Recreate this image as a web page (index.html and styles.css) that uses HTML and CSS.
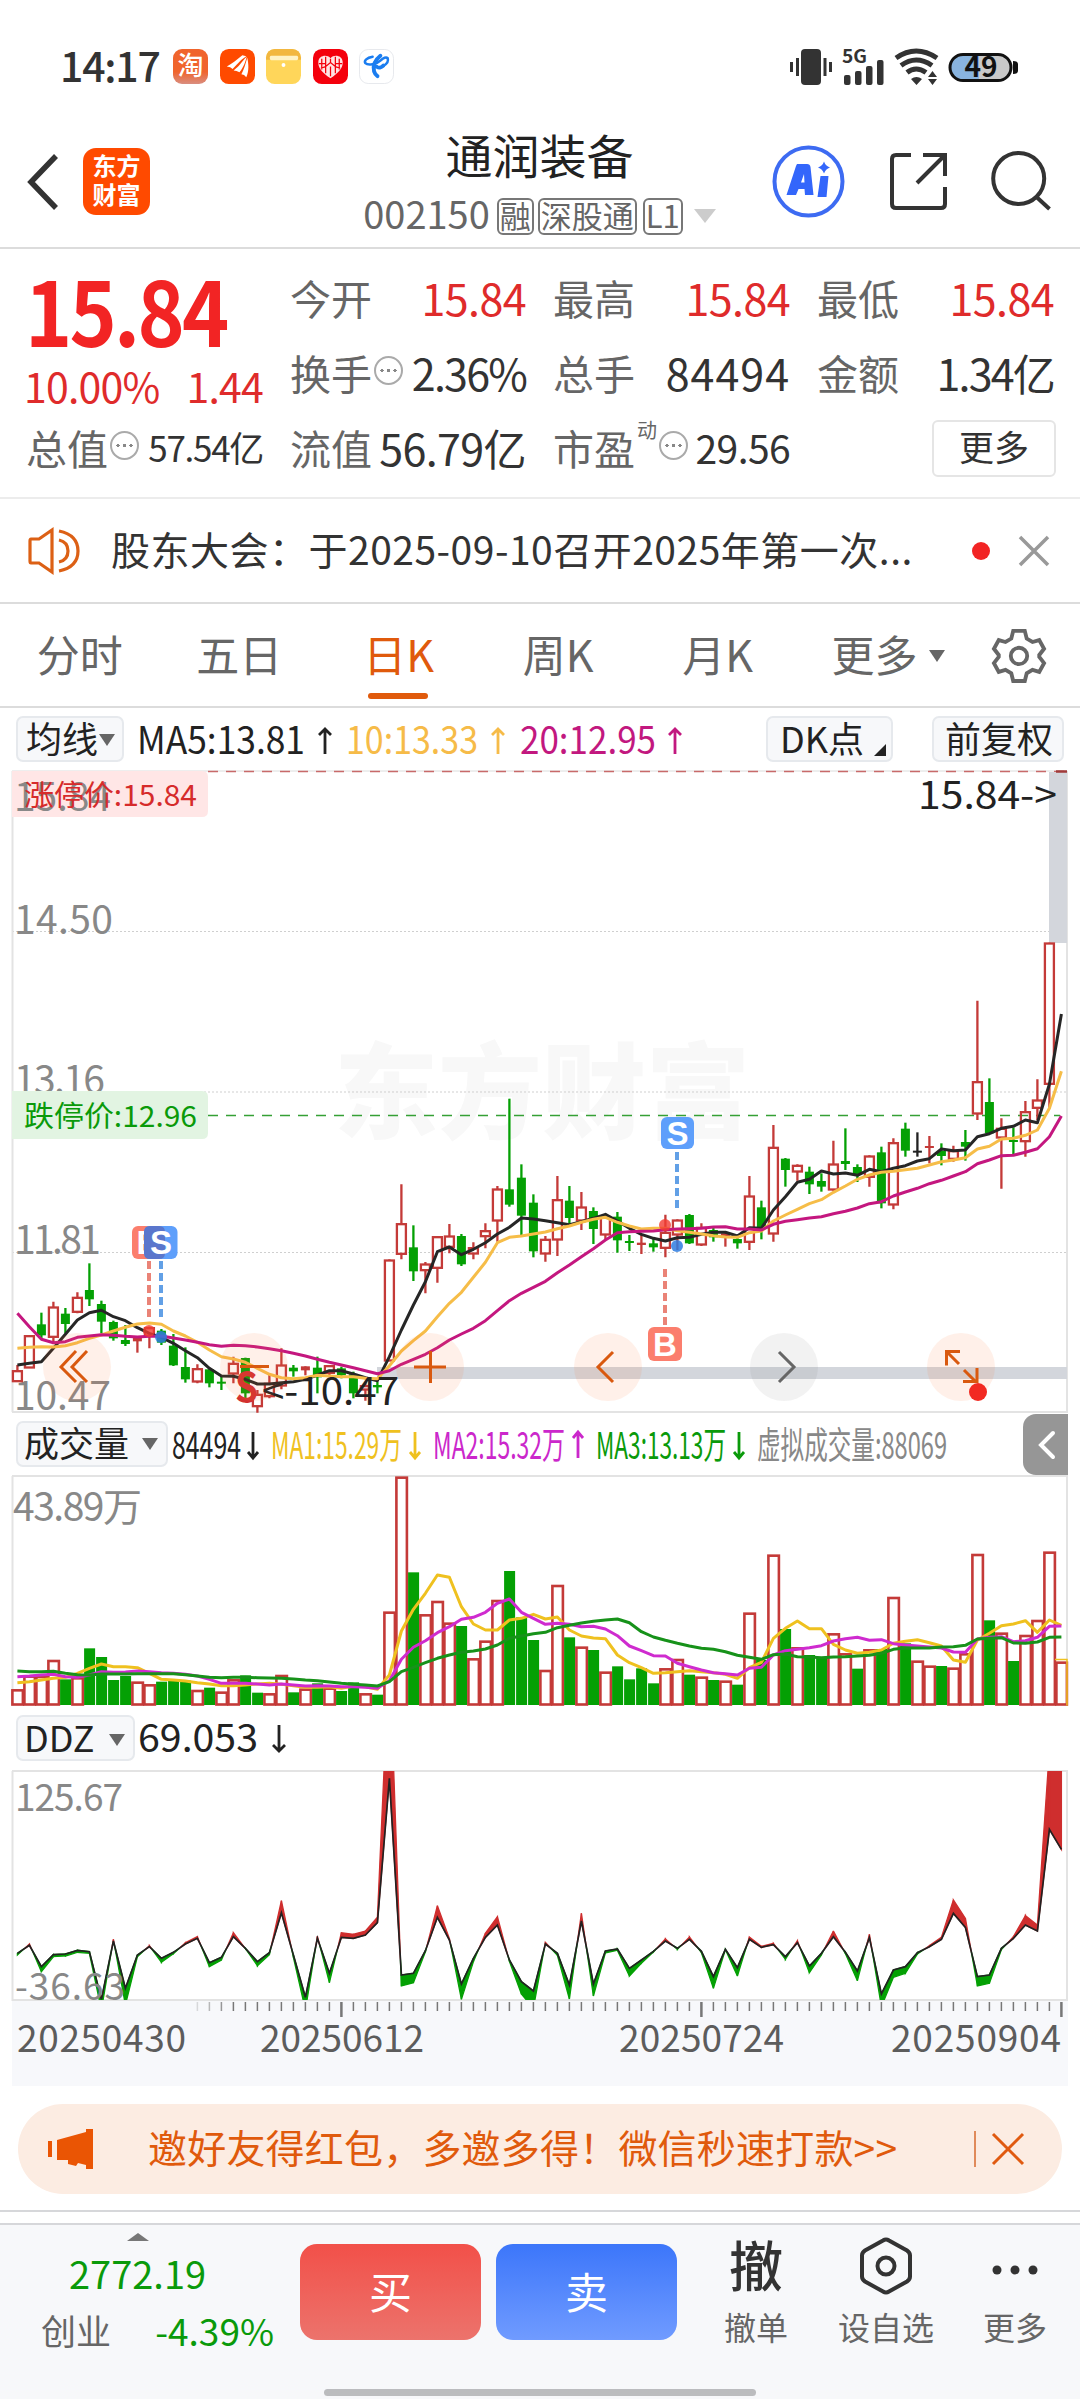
FILE: index.html
```html
<!DOCTYPE html>
<html lang="zh-CN">
<head>
<meta charset="utf-8">
<title>通润装备 002150</title>
<link rel="stylesheet" href="styles.css">
</head>
<body>
<div class="status">
  <span class="time">14:17</span>
  <span class="app tao">淘</span>
  <svg class="app" viewBox="0 0 36 36"><rect width="36" height="36" rx="9" fill="#ff4a00"/><path d="M7 18C13 15 17 11 23 6.500l4 1C20 12 17 17 13 20.500q-2-2-6-2.500zM14 22c6-4 8-9 13.500-14C26 13 25 18 20 24q-3-2-6-2zM22 26c3-6 4-10 6-17 1.500 6 2 14-1 20q-2-3-5-3z" fill="#fff"/></svg>
  <svg class="app" viewBox="0 0 36 36"><rect width="36" height="36" rx="9" fill="#ffd65a"/><path d="M0 11V9a9 9 0 0 1 9-9h18a9 9 0 0 1 9 9v2z" fill="#f2b740"/><rect x="4" y="7" width="29" height="4.500" rx="1.500" fill="#fff2c4"/><circle cx="18" cy="16.500" r="2" fill="#fff"/></svg>
  <svg class="app" viewBox="0 0 36 36"><rect width="36" height="36" rx="9" fill="#f4000c"/><path d="M18 30C9 24 5 19 5.500 13 6 7 14 5 18 9.500 22 5 30 7 30.500 13 31 19 27 24 18 30z" fill="#ffe3e3"/><path d="M9 10v11M13 8v17M18 10v4M18 18v10M23 8v17M27 10v11M6 15h7M23 15h7M13 18l5-4 5 4M8 20l5-2M28 20l-5-2" stroke="#f4000c" stroke-width="1.300" fill="none"/></svg>
  <svg class="app" viewBox="0 0 36 36"><rect x=".5" y=".5" width="35" height="35" rx="9" fill="#fff" stroke="#e6e8ec"/><path d="M14 8C8 9 5 12 6.500 14.500 9 17 18 16 22 12c3-3 6-4 7.500-2.500 1 3-1 6-4.500 8" stroke="#1b7df0" stroke-width="2.600" fill="none" stroke-linecap="round"/><path d="M22 7c-5 4-8 10-6.500 16 1 3 2 4 3.500 5M18 18c2 2 5 1 7-1" stroke="#1b7df0" stroke-width="4" fill="none" stroke-linecap="round"/></svg>
  <svg class="sys" viewBox="0 0 228 40">
    <g fill="#333"><rect x="10" y="2" width="20" height="36" rx="4"/><rect x="5" y="11" width="3" height="18"/><rect x="-1" y="15" width="3" height="10"/><rect x="32.500" y="11" width="3" height="18"/><rect x="38" y="15" width="3" height="10"/>
    <rect x="53" y="28" width="6.500" height="10" rx="2"/><rect x="64" y="24" width="6.500" height="14" rx="2"/><rect x="75" y="19" width="6.500" height="19" rx="2"/><rect x="86" y="13" width="6.500" height="25" rx="2"/>
    <path d="M120 32q5.500-4 11 0l-5.500 6zM137 30l4.500-6 4.500 6zM137 32l4.500 6 4.500-6z"/></g>
    <text x="51" y="15.500" font-size="18" font-weight="700" textLength="25" lengthAdjust="spacingAndGlyphs" fill="#333">5G</text>
    <g fill="none" stroke="#333" stroke-width="5"><path d="M105 11q20-14 41 0M110 18.500q15-11 31 0M116 25.500q9-7 19 0"/></g>
    <rect x="159" y="7.500" width="61" height="26" rx="13" fill="#c9c9c9"/><path d="M188 7.500h-16a13 13 0 0 0 0 26h16z" fill="#89b4df"/><rect x="159" y="7.500" width="61" height="26" rx="13" fill="none" stroke="#111" stroke-width="3"/><path d="M222 14q5 0 5 3v7q0 3-5 3z" fill="#111"/>
    <text x="190" y="30" font-size="28" font-weight="700" text-anchor="middle" fill="#111">49</text>
  </svg>
</div>

<div class="nav">
  <svg class="back" viewBox="0 0 36 60"><path d="M32 4L7 30l25 26" fill="none" stroke="#333" stroke-width="5.500"/></svg>
  <div class="logo">东方<br>财富</div>
  <div class="title">
    <div class="name">通润装备</div>
    <div class="code"><span>002150</span><span class="tag">融</span><span class="tag">深股通</span><span class="tag">L1</span><i class="tri"></i></div>
  </div>
  <svg class="acts" viewBox="0 0 290 76">
    <circle cx="36.500" cy="37.500" r="34" fill="#fff" stroke="#3d6bf2" stroke-width="4"/>
    <path fill-rule="evenodd" d="M25 20h10q3 0 3.500 3L41.500 51h-8.500l-.5-6h-6l-2.500 6H14.500L24 22zM32 30l-3 8.500h3.500z" fill="#3366fb"/><path d="M48.500 32h8L54.500 53H45.500z" fill="#3366fb"/><path d="M52 17.500q1.500 4.500 6 6-4.500 1.500-6 6-1.500-4.500-6-6 4.500-1.500 6-6z" fill="#3366fb"/>
    <path d="M139 11h-15q-4 0-4 4v45q0 4 4 4h45q4 0 4-4V43M173 32V11h-22M172 12L145 39" fill="none" stroke="#333" stroke-width="4"/>
    <circle cx="246.700" cy="34.500" r="25.500" fill="none" stroke="#333" stroke-width="4"/><path d="M264.500 53l13 12" stroke="#333" stroke-width="4"/>
  </svg>
</div>

<div class="quote">
  <div class="last">
    <b>15.84</b>
    <div class="chg"><span>10.00%</span><span>1.44</span></div>
  </div>
  <div class="cell r1 c2"><label>今开</label><span class="red">15.84</span></div>
  <div class="cell r1 c3"><label>最高</label><span class="red">15.84</span></div>
  <div class="cell r1 c4"><label>最低</label><span class="red">15.84</span></div>
  <div class="cell r2 c2"><label>换手<i class="dots"></i></label><span class="tight">2.36%</span></div>
  <div class="cell r2 c3"><label>总手</label><span class="loose">84494</span></div>
  <div class="cell r2 c4"><label>金额</label><span class="tight">1.34亿</span></div>
  <div class="cell r3 c1"><label>总值<i class="dots"></i></label><span class="small">57.54亿</span></div>
  <div class="cell r3 c2"><label>流值</label><span>56.79亿</span></div>
  <div class="cell r3 c3"><label>市盈<sup>动</sup><i class="dots"></i></label><span class="mid">29.56</span></div>
  <div class="cell r3 c4 end"><button class="more">更多</button></div>
</div>

<div class="news">
  <svg viewBox="0 0 54 46" class="horn"><path d="M3 11h8l13-9v42L11 35H3q-1 0-1-2V13q0-2 1-2z M31 3q19 4 19 20T31 43M31 12q9 2 9 11t-9 11" fill="none" stroke="#dc6015" stroke-width="3.200"/></svg>
  <span class="headline">股东大会：于2025-09-10召开2025年第一次...</span>
  <i class="dot"></i>
  <svg viewBox="0 0 32 32" class="x"><path d="M2 2l28 28M30 2L2 30" stroke="#999" stroke-width="3.500"/></svg>
</div>

<div class="tabs">
  <span>分时</span><span>五日</span><span class="on">日K</span><span>周K</span><span>月K</span><span class="rest">更多<i class="tri"></i></span>
  <svg viewBox="0 0 56 56" class="gear"><path d="M22 3h12l2 8 6 3.500 7-2 5 9-5 6.500v2l5 6.500-5 9-7-2-6 3.500-2 8H22l-2-8-6-3.500-7 2-5-9 5-6.500v-2l-5-6.500 5-9 7 2 6-3.500z" fill="none" stroke="#666" stroke-width="4"/><circle cx="28" cy="29" r="8.500" fill="none" stroke="#666" stroke-width="4"/></svg>
</div>

<div class="bar ma">
  <span class="pill">均线<i class="tri"></i></span>
  <svg class="legend" viewBox="0 0 560 62">
    <text x="-1" y="46" textLength="168" lengthAdjust="spacingAndGlyphs" fill="#222">MA5:13.81</text><path d="M187 46V21M181 27l6-6 6 6" stroke="#222"/>
    <text x="208" y="46" textLength="132" lengthAdjust="spacingAndGlyphs" fill="#f6bb48">10:13.33</text><path d="M360 46V21M354 27l6-6 6 6" stroke="#f6bb48"/>
    <text x="382" y="46" textLength="136" lengthAdjust="spacingAndGlyphs" fill="#c2187f">20:12.95</text><path d="M537 46V21M531 27l6-6 6 6" stroke="#c2187f"/>
  </svg>
  <span class="pill dk">DK点<i class="corner"></i></span>
  <span class="pill fq">前复权</span>
</div>

<svg class="plot price" viewBox="0 0 1080 643">
  <text class="mark" x="334" y="361" textLength="416">东方财富</text>
  <g class="grid"><path d="M12 161.500H1067M12 322H1067M12 482.500H1067"/></g>
  <path d="M12.500 1V642M1067 1V642M12 642H1068" stroke="#e3e3e3" stroke-width="2" fill="none"/>
  <path d="M12 1H1067" stroke="#dcdcdc" stroke-width="1"/>
  <path d="M208 1.500H1067" stroke="#c86a6a" stroke-width="1.500" stroke-dasharray="10 8"/>
  <path d="M208 345.500H1060" stroke="#35a035" stroke-width="1.500" stroke-dasharray="10 8"/>
  <rect x="1049" y="2" width="18" height="171" fill="#d3d6dc"/><path d="M1056 1.500h11" stroke="#a03a3a" stroke-width="2.500"/>
  <rect x="377" y="597" width="690" height="12" fill="#d3d6dc"/>
  <path d="M12 1h190q6 0 6 6v34q0 6-6 6H12z" fill="#ffe6e6"/>
  <g class="axis"><text x="14" y="41" textLength="97">15.84</text><text x="14" y="164" textLength="99">14.50</text><text x="14" y="324" textLength="91">13.16</text><text x="14" y="484" textLength="87">11.81</text><text x="14" y="640" textLength="97">10.47</text></g>
  <text x="24" y="35.500" font-size="29" textLength="173" lengthAdjust="spacingAndGlyphs" fill="#d62b2b">涨停价:15.84</text>
  <path d="M12 321h190q6 0 6 6v36q0 6-6 6H12z" fill="#e2f4e2"/><text x="24" y="356.500" font-size="29" textLength="173" lengthAdjust="spacingAndGlyphs" fill="#0a9a0a">跌停价:12.96</text>
  <g id="candles"></g>
  <g id="ma"></g>
  <text x="918" y="39" font-size="38" textLength="139" lengthAdjust="spacingAndGlyphs" fill="#222">15.84-&gt;</text>
  <text x="262" y="635" font-size="38" textLength="137" lengthAdjust="spacingAndGlyphs" fill="#222">&lt;-10.47</text>
  <text x="235" y="632" font-size="41" font-weight="700" textLength="23" lengthAdjust="spacingAndGlyphs" fill="#d23030">S</text>
  <g class="knobs"><circle cx="77" cy="597" r="34"/><circle cx="254" cy="597" r="34"/><circle cx="430" cy="597" r="34"/><circle cx="608" cy="597" r="34"/><circle cx="961" cy="597" r="34"/><circle cx="784" cy="597" r="34" class="off"/></g>
  <g class="signs"><path d="M76 581L61 597l15 15M87 581L72 597l15 15M240 596.500h29M414 597h32M430.500 581v32M613 582L598 597l15 15M946.500 595.500V581.500H960M947 582l12 12M964 600l12 12M977 598V611.500H963"/><path d="M779 582L794 597l-15 15" class="off"/></g>
  <circle cx="978" cy="622" r="9" fill="#f22a22"/>
  <g class="trades">
    <path d="M149 491v56M665 499v56" stroke="#ea8377"/><path d="M161 491v56M677 382v56" stroke="#62a0e6"/>
    <g fill="#f23c32" fill-opacity=".8"><circle cx="149" cy="561" r="6"/><circle cx="665" cy="455" r="6"/></g><g fill="#2f7de0" fill-opacity=".85"><circle cx="161" cy="567" r="6"/><circle cx="677" cy="476" r="6"/></g>
    <rect x="132" y="456" width="33" height="33" rx="6" fill="#fb7e6d"/><text x="148.500" y="484">B</text>
    <rect x="144" y="456" width="33.500" height="33" rx="6" fill="#5e9ffb"/><path d="M144 462q0-6 6-6h9q6 0 6 6v21q0 6-6 6h-9q-6 0-6-6z" fill="#5a76cc"/><text x="161" y="484">S</text>
    <rect x="661" y="347" width="33" height="32" rx="6" fill="#5e9ffb"/><text x="677.500" y="375">S</text>
    <rect x="648" y="557" width="34" height="34" rx="6" fill="#fb7e6d"/><text x="665" y="586">B</text>
  </g>
</svg>

<div class="bar vol">
  <span class="pill">成交量<i class="tri"></i></span>
  <svg class="legend narrow" viewBox="0 0 850 62">
    <text x="0" y="46" textLength="69" lengthAdjust="spacingAndGlyphs" fill="#222">84494</text><path d="M81 19V45M76 39l5 6 5-6" stroke="#222"/>
    <text x="99" y="46" textLength="131" lengthAdjust="spacingAndGlyphs" fill="#efc11f">MA1:15.29万</text><path d="M243 19V45M238 39l5 6 5-6" stroke="#efc11f"/>
    <text x="261" y="46" textLength="132" lengthAdjust="spacingAndGlyphs" fill="#cb27cb">MA2:15.32万</text><path d="M406 45V19M401 25l5-6 5 6" stroke="#cb27cb"/>
    <text x="424" y="46" textLength="130" lengthAdjust="spacingAndGlyphs" fill="#0a9a0a">MA3:13.13万</text><path d="M567 19V45M562 39l5 6 5-6" stroke="#0a9a0a"/>
    <text x="585" y="46" textLength="190" lengthAdjust="spacingAndGlyphs" fill="#888">虚拟成交量:88069</text>
  </svg>
  <span class="handle"><svg viewBox="0 0 45 61"><path d="M30 19L18 31l12 12" fill="none" stroke="#fff" stroke-width="4" stroke-linecap="round"/></svg></span>
</div>
<svg class="plot volume" viewBox="0 0 1080 232">
  <path d="M12.500 1V231M1067 1V231M12 1H1068" stroke="#e3e3e3" stroke-width="2" fill="none"/>
  <g id="volumes"></g><g id="vma"></g>
  <g class="axis"><text x="13" y="45.500" textLength="129">43.89万</text></g>
</svg>

<div class="bar ddz">
  <span class="pill">DDZ<i class="tri"></i></span>
  <svg class="legend" viewBox="0 0 170 62"><text x="0" y="45" textLength="120" lengthAdjust="spacingAndGlyphs" fill="#222">69.053</text><path d="M141 18V44M135 38l6 6 6-6" stroke="#222"/></svg>
</div>
<svg class="plot ddzplot" viewBox="0 0 1080 317">
  <rect x="12" y="231" width="1056" height="85" fill="#f7f8fb"/>
  <path d="M12.500 1V230H1067V1H12" stroke="#e3e3e3" stroke-width="2" fill="none"/>
  <g id="ddz"></g><g id="ticks"></g>
  <g class="axis"><text x="15" y="41" textLength="108">125.67</text><text x="15" y="230" textLength="110">-36.63</text></g>
  <g class="dates"><text x="17" y="282" textLength="169">20250430</text><text x="260" y="282" textLength="164">20250612</text><text x="619" y="282" textLength="165">20250724</text><text x="891" y="282" textLength="170">20250904</text></g>
</svg>

<div class="promo">
  <svg viewBox="0 0 46 40" class="mega"><path d="M0 12h4v16H0zM9 11L38 3V0h7v40h-7v-4l-8-2-2 3-8-2v-4H9z" fill="#ea5504"/></svg>
  <span class="ptext">邀好友得红包，多邀多得！微信秒速打款&gt;&gt;</span>
  <i class="sep"></i>
  <svg viewBox="0 0 34 34" class="px"><path d="M2 2l30 30M32 2L2 32" stroke="#e05a10" stroke-width="3"/></svg>
</div>

<div class="dock">
  <div class="index"><i class="up"></i><span class="pts">2772.19</span><div class="sub"><label>创业</label><span>-4.39%</span></div></div>
  <button class="buy">买</button><button class="sell">卖</button>
  <div class="item i1"><b>撤</b><span>撤单</span></div>
  <div class="item i2"><svg viewBox="0 0 56 58"><path d="M25 3.500q3-2 6 0l18 10q3 2 3 5v21q0 3-3 5l-18 10q-3 2-6 0L7 44.500q-3-2-3-5v-21q0-3 3-5z" fill="none" stroke="#333" stroke-width="4"/><circle cx="28" cy="29" r="8.500" fill="none" stroke="#333" stroke-width="4"/></svg><span>设自选</span></div>
  <div class="item i3"><svg viewBox="0 0 56 58"><g fill="#333"><circle cx="10" cy="33" r="4.500"/><circle cx="28" cy="33" r="4.500"/><circle cx="46" cy="33" r="4.500"/></g></svg><span>更多</span></div>
</div>
<div class="home"><i></i></div>
<script src="charts.js"></script>
</body>
</html>
```
FILE: styles.css
```css
* { box-sizing: border-box; }
body { margin: 0; width: 1080px; height: 2400px; background: #fff; color: #333; font-family: "Noto Sans CJK SC", sans-serif; line-height: 1; overflow: hidden; }
svg { display: block; flex: none; overflow: visible; }
button { font: inherit; border: 0; padding: 0; }
i { font-style: normal; }
.red { color: #df2b2b; }
.tri { display: inline-block; border: 8px solid transparent; border-bottom: 0; border-top: 12px solid #666; }

.status { height: 110px; padding: 0 61px 0 60px; display: flex; align-items: flex-start; }
.time { width: 113px; padding-top: 44px; font-size: 41px; font-weight: 500; line-height: 41px; letter-spacing: -1.2px; }
.app { width: 35px; height: 35px; margin: 49px 11.500px 0 0; border-radius: 9px; }
.tao { background: linear-gradient(#f0642c 65%, #d98e80); color: #fff; font-weight: 500; font-size: 26px; line-height: 29px; text-align: center; }
.sys { width: 228px; height: 40px; margin: 47px 0 0 auto; }

.nav { height: 139px; border-bottom: 2px solid #dcdcdc; display: flex; align-items: flex-start; }
.back { width: 36px; height: 60px; margin: 42px 0 0 24px; }
.logo { width: 67px; height: 67px; margin: 38px 0 0 23px; border-radius: 13px; background: #ff4a00; color: #fff; font-size: 24px; font-weight: 700; line-height: 29px; text-align: center; padding-top: 2px; }
.title { flex: 1; display: flex; flex-direction: column; align-items: center; padding-left: 165px; }
.name { font-size: 47px; line-height: 47px; margin-top: 20px; color: #222; }
.code { display: flex; align-items: center; margin-top: 19px; color: #666; font-size: 38px; height: 40px; line-height: 34px; }
.code > span:first-child { margin-right: 7px; padding-bottom: 6px; }
.tag { border: 2px solid #777; border-radius: 6px; height: 37px; line-height: 29px; font-size: 31px; padding: 0 1px; margin-right: 6px; margin-top: 1px; }
.tag:nth-child(2) { margin-right: 4px; }
.code .tri { border-width: 14px 11px 0; border-top-color: #ccc; margin-left: 5px; }
.acts { width: 290px; height: 76px; margin: 34px 18px 0 8px; }

.quote { height: 250px; border-bottom: 2px solid #ececec; padding: 14px 26px 0; display: grid; grid-template-columns: 237px 236px 237px 237px; column-gap: 27px; grid-template-rows: 75px 75px 75px; }
.last { grid-row: 1 / 3; grid-column: 1; color: #f22424; }
.last b { display: block; width: 230px; font-size: 89px; line-height: 90px; height: 90px; font-weight: 700; letter-spacing: -3px; margin: 1px 0 0 -1px; transform: scaleX(.9); transform-origin: 0 0; }
.chg { display: flex; justify-content: space-between; font-size: 41px; line-height: 41px; letter-spacing: -.8px; margin: 11px 0 0 -2px; color: #df2b2b; }
.cell { display: flex; justify-content: space-between; align-items: center; font-size: 43px; line-height: 64px; padding-bottom: 7px; white-space: nowrap; letter-spacing: -.6px; }
.cell label { font-size: 41px; color: #666; letter-spacing: 0; }
.tight { letter-spacing: -1.8px; } .loose { letter-spacing: 1px; }
.r1 { grid-row: 1; } .r2 { grid-row: 2; } .r3 { grid-row: 3; }
.c1 { grid-column: 1; } .c2 { grid-column: 2; } .c3 { grid-column: 3; } .c4 { grid-column: 4; }
.small { font-size: 35px; letter-spacing: -1.3px; } .mid { font-size: 39px; }
.dots { display: inline-block; width: 29px; height: 29px; border: 2px solid #aaa; border-radius: 50%; vertical-align: 5px; margin-left: 2px; background: radial-gradient(circle 1.8px at 6px 12.500px, #888 90%, transparent), radial-gradient(circle 1.8px at 12.500px 12.500px, #888 90%, transparent), radial-gradient(circle 1.8px at 19px 12.500px, #888 90%, transparent); }
.cell sup { font-size: 20px; line-height: 20px; vertical-align: 27px; margin: 0 0 0 2px; }
.end { justify-content: flex-end; margin-right: -2px; }
.more { width: 124px; height: 57px; margin-top: 2px; border: 2px solid #e5e5e5; border-radius: 6px; background: #fff; color: #333; font-size: 35px; line-height: 48px; padding-bottom: 5px; }

.news { height: 105px; border-bottom: 2px solid #dcdcdc; display: flex; align-items: center; padding: 0 30px 0 28px; }
.horn { width: 54px; height: 46px; }
.headline { font-size: 39px; line-height: 60px; padding-bottom: 6px; margin-left: 29px; white-space: nowrap; width: 861px; color: #333; letter-spacing: .5px; }
.dot { width: 18px; height: 18px; border-radius: 50%; background: #f22424; }
.x { width: 32px; height: 32px; margin-left: auto; }

.tabs { height: 104px; border-bottom: 2px solid #dcdcdc; padding-right: 34px; display: flex; color: #666; font-size: 43px; }
.tabs span { width: 159.500px; line-height: 99px; height: 95px; white-space: nowrap; text-align: center; }
.tabs .on { color: #e05a0c; position: relative; }
.tabs .on::after { content: ""; position: absolute; left: 49px; width: 60px; bottom: 0; height: 6px; border-radius: 3px; background: #e05a0c; }
.tabs .rest { width: auto; padding-left: 34px; }
.tabs .tri { margin-left: 11px; vertical-align: 10px; }
.gear { width: 54px; height: 54px; margin: 24px 0 0 auto; }

.bar { height: 62px; display: flex; padding-left: 16px; }
.pill { height: 46px; margin-top: 8px; border: 2px solid #e6e9ed; border-radius: 7px; background: #f7f8fa; color: #222; font-size: 36px; line-height: 38px; white-space: nowrap; padding-left: 8px; }
.legend { height: 62px; font-size: 38px; }
.legend path { fill: none; stroke-width: 2.800; }
.ma .pill:first-child { width: 108px; }
.ma .pill .tri { margin-left: 1px; vertical-align: 7px; }
.ma .legend { width: 560px; margin-left: 14px; }
.dk { width: 127px; margin-left: 68px; padding-left: 12px; position: relative; }
.corner { position: absolute; right: 5px; bottom: 4px; border: 6px solid transparent; border-right-color: #222; border-bottom-color: #222; }
.fq { width: 132px; margin-left: 39px; padding-left: 11px; }
.vol .pill { width: 152px; font-size: 35px; padding-left: 6px; }
.vol .pill .tri { margin-left: 13px; vertical-align: 7px; }
.vol .legend { width: 850px; margin-left: 4px; }
.narrow { font-size: 37px; }
.handle { width: 45px; height: 61px; margin-left: 1px; margin-top: 1px; border-radius: 13px 0 0 13px; background: #969696; }
.ddz { height: 63px; }
.ddz .pill { width: 119px; padding-left: 6px; }
.ddz .pill .tri { margin-left: 15px; vertical-align: 6px; }
.ddz .legend { width: 170px; margin-left: 3px; }

.plot { width: 1080px; }
.price { height: 643px; } .volume { height: 232px; } .ddzplot { height: 317px; }
.axis { font-size: 39px; fill: #888; }
.ddzplot .axis { font-size: 37px; }
.dates { font-size: 37px; fill: #5c5c5c; }
.mark { font-size: 104px; font-weight: 900; fill: #f8f8f8; }
.grid path { stroke: #cfcfcf; stroke-width: 1; stroke-dasharray: 2 2; fill: none; }
.knobs circle { fill: #ff7a38; fill-opacity: .11; }
.knobs .off { fill: #555; fill-opacity: .08; }
.signs path { fill: none; stroke: #d9590f; stroke-width: 3; }
.signs .off { stroke: #666; }
.trades path[stroke] { stroke-width: 4; stroke-dasharray: 8 4; }
.trades text { font-family: "Liberation Sans", sans-serif; font-weight: 700; font-size: 33px; fill: #fff; text-anchor: middle; }
.line { fill: none; stroke-width: 3; stroke-linejoin: round; }

.promo { height: 90px; margin: 17px 18px 16px; border-radius: 45px; background: #fcece2; color: #e05a0c; display: flex; align-items: center; padding-left: 30px; }
.mega { width: 46px; height: 40px; }
.ptext { font-size: 39px; line-height: 60px; padding-bottom: 6px; margin-left: 54px; white-space: nowrap; width: 809px; letter-spacing: .2px; }
.sep { width: 2px; height: 36px; margin-left: 17px; background: #e08a5a; }
.px { width: 34px; height: 34px; margin-left: 15px; }

.dock { position: relative; height: 162px; margin-top: 29px; border-top: 2px solid #d6d7da; background: #f7f8fa; display: flex; align-items: flex-start; }
.dock::before { content: ""; position: absolute; left: 0; right: 0; top: -15px; height: 2px; background: #d6d7da; }
.index { width: 277px; padding: 0 3px 0 41px; display: flex; flex-direction: column; color: #0a9a0a; }
.up { margin: 8px 0 0 86px; width: 22px; border: 11px solid transparent; border-top: 0; border-bottom: 8px solid #777; }
.pts { font-size: 38px; line-height: 38px; margin: 13px 0 0 28px; }
.sub { display: flex; justify-content: space-between; margin-top: 17px; font-size: 37px; line-height: 42px; }
.sub label { color: #666; font-size: 35px; }
.buy, .sell { width: 181px; height: 96px; border-radius: 17px; color: #fff; font-size: 43px; margin: 19px 0 0 23px; line-height: 86px; padding-bottom: 4px; }
.buy { background: linear-gradient(#f25049, #ec736c); }
.sell { background: linear-gradient(#3c76fa, #709bff); margin-left: 15px; }
.item { display: flex; flex-direction: column; align-items: center; color: #666; font-size: 32px; line-height: 38px; width: 120px; }
.item b { font-size: 54px; font-weight: 500; color: #333; line-height: 54px; height: 68px; padding-top: 12px; }
.item svg { width: 56px; height: 58px; margin: 12px 0 0; }
.item span { margin-top: 14px; }
.item svg + span { margin-top: 12px; }
.i1 { margin-left: 19px; } .i2 { margin-left: 10px; } .i3 { margin-left: 9px; }
.home { height: 14px; background: #f7f8fa; display: flex; justify-content: center; }
.home i { width: 432px; height: 7px; margin-top: 4px; border-radius: 4px; background: #bbbcbe; }
```
FILE: charts.js
```js
// Series are stored in thirds of a pixel, relative to the top of each block.
const X0 = 17.4, STEP = 12;
const x = i => X0 + i * STEP;
const RED = '#c43a38', GREEN = '#04a004';
const put = (id, html) => { document.getElementById(id).innerHTML += html; };
const nums = s => s.trim().split(/\s+/).map(Number);
const line = (color, ys) => `<polyline class="line" stroke="${color}" points="${ys.map((y, i) => x(i).toFixed(1) + ',' + y.toFixed(1)).join(' ')}"/>`;

// colour, high, body top, body bottom, low
const blocks = [
[990, `r 795 812 845 845|r 706 707 804 804|g 638 673 706 718|r 605 621 712 728|g 624 641 672 700|r 577 592 637 640|g 490 570 598 618|g 602 612 665 700|g 662 666 715 722|g 675 720 732 738|r 712 712 724 758|r 680 683 708 745|g 687 692 728 735|g 702 737 796 798|g 742 801 838 848|r 793 806 846 850|g 805 808 850 862|g 830 845 849 870|r 770 790 822 850|g 773 774 880 900|r 870 883 920 938|r 820 850 890 895|r 745 795 858 868|g 795 803 814 830|r 799 799 811 826|g 770 803 832 880|r 795 797 820 826|g 800 805 826 835|g 815 823 880 895|r 845 857 870 902|g 845 855 862 880|r 478 480 783 783`],
[750, `r 493 611 703 718|g 616 682 754 783|r 726 732 752 820|r 648 650 745 788|r 612 648 682 700|g 642 648 733 738|r 667 683 702 718|r 610 632 650 685|r 498 507 603 665|g 236 508 554 560|g 433 473 587 645|g 523 548 694 712|r 648 658 702 725|r 468 539 660 708|g 498 542 594 612|r 516 561 603 630|g 562 573 627 672|r 585 592 645 660|g 576 590 661 698|g 645 663 668 693|r 645 668 675 702|g 655 670 682 695|r 584 637 685 712|r 598 600 645 690|g 582 585 670 672|r 610 622 675 678|g 618 630 652 665|r 635 640 650 680|g 645 657 670 686`],
[390, `r 828 888 1027 1050|g 902 922 985 1018|r 675 742 1002 1025|g 774 776 810 860|r 793 796 816 842|g 800 815 853 882|g 820 843 860 875|r 722 792 870 872|g 685 783 792 810|g 793 801 822 846|r 766 768 832 860|g 740 757 910 925|r 715 728 915 928|g 668 686 752 770|k 697 752 757 770|r 708 738 744 790|g 730 753 768 796|r 737 752 778 785|g 690 726 740 782|r 302 545 642 660|g 535 606 700 702|r 655 685 714 866|g 683 720 724 765|r 603 635 725 770|r 538 600 625 660|r 128 129 553 625`]
];
let k = 0, out = '';
for (const [off, rows] of blocks) for (const row of rows.split('|')) {
  const [c, ...v] = row.split(' ');
  const [h, t, b, l] = v.map(n => (+n + off) / 3), cx = x(k++);
  const col = c === 'r' ? RED : c === 'g' ? GREEN : '#222';
  if (c === 'r' && b - t > 4) {
    out += `<path d="M${cx} ${h}V${t}M${cx} ${b}V${l}" stroke="${col}" stroke-width="2.3"/><rect x="${cx - 4.5}" y="${t + .5}" width="9" height="${b - t - 1}" fill="none" stroke="${col}" stroke-width="2.3"/>`;
  } else {
    out += `<path d="M${cx} ${h}V${l}" stroke="${col}" stroke-width="2.3"/><rect x="${cx - 4.5}" y="${t}" width="9" height="${Math.max(b - t, 2)}" fill="${col}"/>`;
  }
}
put('candles', out);

const join = (a, b, c) => [...nums(a).map(n => (n + 990) / 3), ...nums(b).map(n => (n + 750) / 3), ...nums(c).map(n => (n + 390) / 3)];
put('ma', line('#262626', join(
`795 790 785 745 703 660 638 631 650 662 683 700 712 730 752 773 805 828 829 838 852 852 848 845 838 825 812 812 822 833 842`,
`1010 930 855 785 695 681 704 688 668 642 622 594 597 602 608 614 605 595 583 603 625 643 655 663 653 652 643 637 637 648`,
`983 985 930 890 847 838 813 822 819 826 808 815 805 797 783 776 747 752 750 710 701 685 679 660 668 553 342`)));
put('ma', line('#f6bd48', join(
`745 742 740 741 737 728 715 705 693 682 672 669 673 693 708 727 750 770 777 787 805 823 833 836 833 826 828 830 830 835 836`,
`1037 993 962 933 890 850 817 772 727 668 652 648 642 636 626 618 607 598 592 607 618 627 625 625 632 637 642 647 651 652`,
`998 993 963 945 928 911 899 877 858 838 825 817 814 809 805 795 785 780 773 747 739 717 715 706 690 625 514`)));
put('ma', line('#c4177f', join(
`640 680 718 728 725 712 708 704 706 709 711 709 708 714 720 727 734 739 736 737 741 746 752 760 768 778 787 795 803 812 821`,
`1052 1033 1018 1003 983 960 942 925 902 872 842 820 802 784 758 735 710 686 660 638 635 634 633 629 627 626 625 621 620 627`,
`987 990 973 964 959 954 950 941 934 924 911 905 888 876 865 851 841 828 815 791 780 767 766 757 746 710 648`)));

const vol = 'r868 r827 r828 r780 g838 r832 g745 g771 g840 g828 r845 r853 g845 g840 g842 r870 g863 r875 r838 g826 g878 r880 r825 g877 r866 g850 r863 g873 g847 r880 g884 r635 r230 g517 r643 r603 r668 g678 r775 r722 r600 g513 g652 g720 r810 r555 g712 r740 g750 r815 g799 g838 g805 g850 r805 r777 g824 r830 g840 r842 g854 r638 g780 r464 g687 r742 g765 g772 r700 r760 g806 r748 g747 r591 g730 r782 r797 g798 r803 r760 r462 g661 r698 g783 r705 r660 r455 r785'.split(' ');
const vy = n => (n - 225) / 3;
put('volumes', vol.map((s, i) => {
  const y = vy(+s.slice(1)), cx = x(i);
  return s[0] === 'r'
    ? `<rect x="${cx - 5}" y="${y + 1}" width="10.500" height="${228.5 - y}" fill="#fff" stroke="${RED}" stroke-width="2.600"/>`
    : `<rect x="${cx - 5.3}" y="${y}" width="11" height="${230 - y}" fill="${GREEN}"/>`;
}).join('') + '<path d="M1055 184.500h12v46" stroke="#efc11f" stroke-width="1.500" fill="none"/>');
put('vma', line('#efc11f', nums(`848 845 840 835 832 820 805 792 800 800 803 820 838 840 843 848 852 857 857 855 852 850 853 857 862 862 860 865 858 860 868 825 693 628 580 525 532 620 672 690 690 660 655 643 657 651 690 708 714 716 765 788 803 820 818 815 812 815 818 823 835 803 787 715 685 663 686 686 733 750 760 757 750 730 724 719 728 738 780 787 720 700 677 672 662 697 660 676`).map(vy)));
put('vma', line('#cf2bcf', nums(`830 828 825 823 830 832 825 815 817 816 813 815 818 820 823 828 838 850 850 850 852 855 852 855 858 857 858 860 860 862 865 842 778 742 722 698 680 658 652 637 610 597 637 655 673 670 673 680 679 687 707 738 752 767 768 790 800 810 818 821 825 805 802 765 752 748 743 737 723 716 712 721 719 731 735 738 741 744 756 757 717 712 710 725 722 712 679 678`).map(vy)));
put('vma', line('#17921a', nums(`813 815 815 814 820 824 825 822 822 822 821 821 821 821 824 828 832 833 832 832 833 834 835 837 840 842 846 850 853 855 858 845 815 802 788 775 765 757 753 747 735 715 708 701 697 683 676 669 664 660 657 668 695 711 721 730 738 745 748 755 766 772 778 764 762 770 771 773 771 770 768 766 760 748 744 744 744 741 740 736 717 715 713 729 730 726 712 711`).map(vy)));

// DDZ: pairs of signal line and band edge; the band is red above the line and green below it
const dy = n => (n - 180) / 3;
const pairs = '730,735 706,702 770,785 734,740 732,738 721,727 725,730 868,900 693,688 835,885 735,740 710,707 745,757 727,731 702,698 685,680 758,770 742,750 680,668 715,716 755,767 728,734 608,572 735,742 862,900 685,679 790,818 682,668 685,673 675,663 638,622 205,-180 795,828 790,818 722,726 622,587 690,686 822,868 745,755 682,670 645,620 750,754 815,852 843,895 702,697 730,736 825,867 633,610 822,858 723,729 717,721 775,798 750,760 724,726 693,687 715,718 688,681 724,728 800,835 718,719 773,798 688,681 712,709 704,700 740,748 698,692 768,788 730,735 680,663 727,731 783,812 683,673 852,890 780,802 770,790 728,732 710,707 688,682 610,570 652,625 800,828 795,820 715,719 685,680 645,617 663,645 358,120 418,100'.split(' ').map(p => p.split(',').map(n => dy(+n)));
let band = '', sig = '';
for (let i = 0; i < pairs.length; i++) {
  const [a, e] = pairs[i];
  sig += `${x(i)},${a} `;
  if (i + 1 === pairs.length) break;
  const [b, f] = pairs[i + 1], d0 = e - a, d1 = f - b;
  const area = (p, d) => `<polygon points="${p}" fill="${d < 0 ? '#cf2e2e' : GREEN}" stroke="${d < 0 ? '#cf2e2e' : GREEN}" stroke-width="1.300"/>`;
  if (d0 * d1 < 0) {
    const t = d0 / (d0 - d1), mx = x(i) + t * STEP, my = a + t * (b - a);
    band += area(`${x(i)},${a} ${x(i)},${e} ${mx},${my}`, d0) + area(`${x(i + 1)},${b} ${x(i + 1)},${f} ${mx},${my}`, d1);
  } else band += area(`${x(i)},${a} ${x(i)},${e} ${x(i + 1)},${f} ${x(i + 1)},${b}`, d0 || d1);
}
put('ddz', `<clipPath id="frame"><rect x="12" y="1" width="1056" height="229"/></clipPath><g clip-path="url(#frame)">${band}<polyline points="${sig}" fill="none" stroke="#222" stroke-width="1.700"/></g>`);

let ticks = '';
for (let i = 15; i < 88; i++) {
  const major = (i - 27) % 30 === 0;
  ticks += `<path d="M${x(i)} 232v${major ? 15 : 9}" stroke="#777" stroke-opacity="${Math.min(1, (i - 14) / 4)}" stroke-width="${major ? 2.5 : 1.5}"/>`;
}
put('ticks', ticks);
```
